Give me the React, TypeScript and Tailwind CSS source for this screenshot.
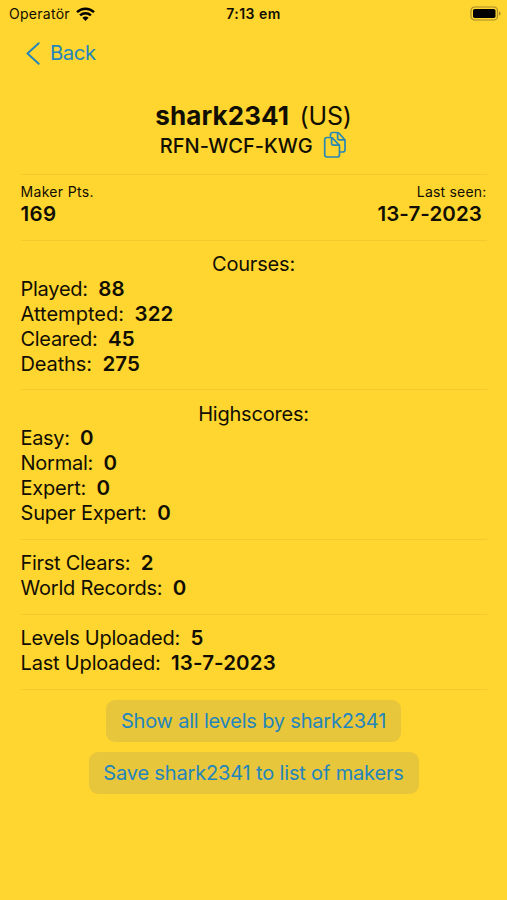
import React from "react";

type Stat = { label: string; value: string; labelClass: string };

const courses: Stat[] = [
  { label: "Played:", value: "88", labelClass: "tracking-[-0.25px]" },
  { label: "Attempted:", value: "322", labelClass: "tracking-[0.03px]" },
  { label: "Cleared:", value: "45", labelClass: "tracking-[-0.3px]" },
  { label: "Deaths:", value: "275", labelClass: "tracking-[-0.12px]" },
];
const highscores: Stat[] = [
  { label: "Easy:", value: "0", labelClass: "tracking-[-0.35px]" },
  { label: "Normal:", value: "0", labelClass: "tracking-[-0.25px]" },
  { label: "Expert:", value: "0", labelClass: "tracking-[-0.2px]" },
  { label: "Super Expert:", value: "0", labelClass: "tracking-[-0.2px]" },
];
const records: Stat[] = [
  { label: "First Clears:", value: "2", labelClass: "tracking-[-0.28px]" },
  { label: "World Records:", value: "0", labelClass: "tracking-[-0.2px]" },
];
const uploads: Stat[] = [
  { label: "Levels Uploaded:", value: "5", labelClass: "tracking-[-0.25px]" },
  { label: "Last Uploaded:", value: "13-7-2023", labelClass: "tracking-[-0.18px]" },
];

function Section({ title, stats }: { title?: string; stats: Stat[] }) {
  return (
    <section className="border-b border-[#f2c92e] pt-[11.3px] pb-[12.8px] text-[20px] leading-[24.9px] tracking-[-0.2px]">
      {title && <h2 className="text-center">{title}</h2>}
      {stats.map((s) => (
        <div key={s.label} className="flex gap-[10.5px]">
          <span className={s.labelClass}>{s.label}</span>
          <span className="text-[20.5px] font-semibold tracking-[0.12px]">{s.value}</span>
        </div>
      ))}
    </section>
  );
}

function Wifi() {
  return (
    <svg className="h-[14px] w-[19px]" viewBox="0 0 19 14" fill="none" stroke="#000" strokeWidth="2.5">
      <path d="M1 5.2C5.8.6 13.2.6 18 5.2" />
      <path d="M4.1 8.3C7.1 5.5 11.9 5.5 14.9 8.3" />
      <path d="M9.5 14 6.4 10.8Q9.5 8.3 12.6 10.8Z" fill="#000" stroke="none" />
    </svg>
  );
}

function Battery() {
  return (
    <svg className="h-[15px] w-[31px]" viewBox="0 0 31 15" fill="none">
      <rect x="1" y="1" width="26.5" height="13" rx="3.6" stroke="#a58b28" strokeWidth="1.2" />
      <rect x="3" y="3" width="22.5" height="9" rx="1.8" fill="#000" />
      <path d="M29 5.3Q30.6 6 30.6 7.5T29 9.7Z" fill="#a58b28" />
    </svg>
  );
}

function Copy() {
  return (
    <svg className="h-[28px] w-[24px]" viewBox="0 0 24 28" fill="none" stroke="#2888b4" strokeWidth="1.7" strokeLinejoin="round" strokeLinecap="round">
      <path d="M7.5 5V3.8Q7.5 1.5 9.8 1.5H14.3Q15.3 1.5 16 2.3L21.2 8Q22 8.8 22 9.8V18.7Q22 21 19.7 21H17" />
      <path d="M14.6 1.8V7Q14.6 8.8 16.4 8.8H21.7" />
      <path d="M4 6.5H7.7Q8.8 6.5 9.5 7.2L15.8 13.6Q16.5 14.4 16.5 15.4V23.7Q16.5 26 14.2 26H4Q1.7 26 1.7 23.7V8.8Q1.7 6.5 4 6.5Z" />
      <path d="M8.6 6.8V12.2Q8.6 14.1 10.5 14.1H16.2" />
    </svg>
  );
}

export default function App() {
  return (
    <main className="h-[900px] w-[507px] overflow-hidden bg-[#ffd52f] font-['Inter',sans-serif] text-[#110e03]">
      <header className="grid h-[27px] grid-cols-3 items-center text-[14px]">
        <div className="flex items-center gap-[6.5px] pl-[9px]">
          <span className="tracking-[0.28px]">Operatör</span>
          <Wifi />
        </div>
        <span className="text-center text-[14px] font-semibold tracking-[0.45px]">7:13 em</span>
        <div className="flex justify-end pr-[6px]">
          <Battery />
        </div>
      </header>

      <nav className="flex h-[51px] items-center pt-[2px] pl-[26px] text-[20.3px] text-[#2385bd]">
        <svg className="mr-[10px] h-[23px] w-[14px]" viewBox="0 0 14 23" fill="none" stroke="currentColor" strokeWidth="1.9" strokeLinecap="round" strokeLinejoin="round">
          <path d="M12.7 1.2 1.5 11.5 12.7 21.8" />
        </svg>
        <span className="tracking-[-0.45px]">Back</span>
      </nav>

      <div className="px-[20.5px]">
        <div className="flex h-[97px] flex-col items-center border-b border-[#f2c92e] pt-[21px]">
          <div className="flex h-[32px] items-center gap-[10.5px] pt-px leading-[32px]">
            <h1 className="text-[26px] font-bold tracking-[0.1px]">shark2341</h1>
            <span className="text-[25px] tracking-[-0.2px]">(US)</span>
          </div>
          <div className="flex h-[28px] items-center gap-[10.5px] text-[20px] font-medium">
            <span className="pt-px tracking-[0.05px]">RFN-WCF-KWG</span>
            <Copy />
          </div>
        </div>

        <div className="flex h-[65.6px] justify-between border-b border-[#f2c92e] pt-[8px]">
          <div>
            <div className="text-[14px] leading-[18px] tracking-[0.32px]">Maker Pts.</div>
            <div className="text-[20.5px] leading-[26px] font-semibold tracking-[0.4px]">169</div>
          </div>
          <div className="text-right">
            <div className="text-[14px] leading-[18px] tracking-[0.2px]">Last seen:</div>
            <div className="pr-[4.5px] text-[20.5px] leading-[26px] font-semibold tracking-[0.1px]">13-7-2023</div>
          </div>
        </div>

        <Section title="Courses:" stats={courses} />
        <Section title="Highscores:" stats={highscores} />
        <Section stats={records} />
        <Section stats={uploads} />

        <div className="flex flex-col items-center gap-[10px] pt-[10px] text-[20px] text-[#2385bd]">
          <button className="h-[42px] w-[295px] rounded-[9px] bg-[#e8c63c] pt-px tracking-[-0.2px] whitespace-nowrap">Show all levels by shark2341</button>
          <button className="h-[42px] w-[330px] rounded-[9px] bg-[#e8c63c] pt-px tracking-[-0.16px] whitespace-nowrap">Save shark2341 to list of makers</button>
        </div>
      </div>
    </main>
  );
}
